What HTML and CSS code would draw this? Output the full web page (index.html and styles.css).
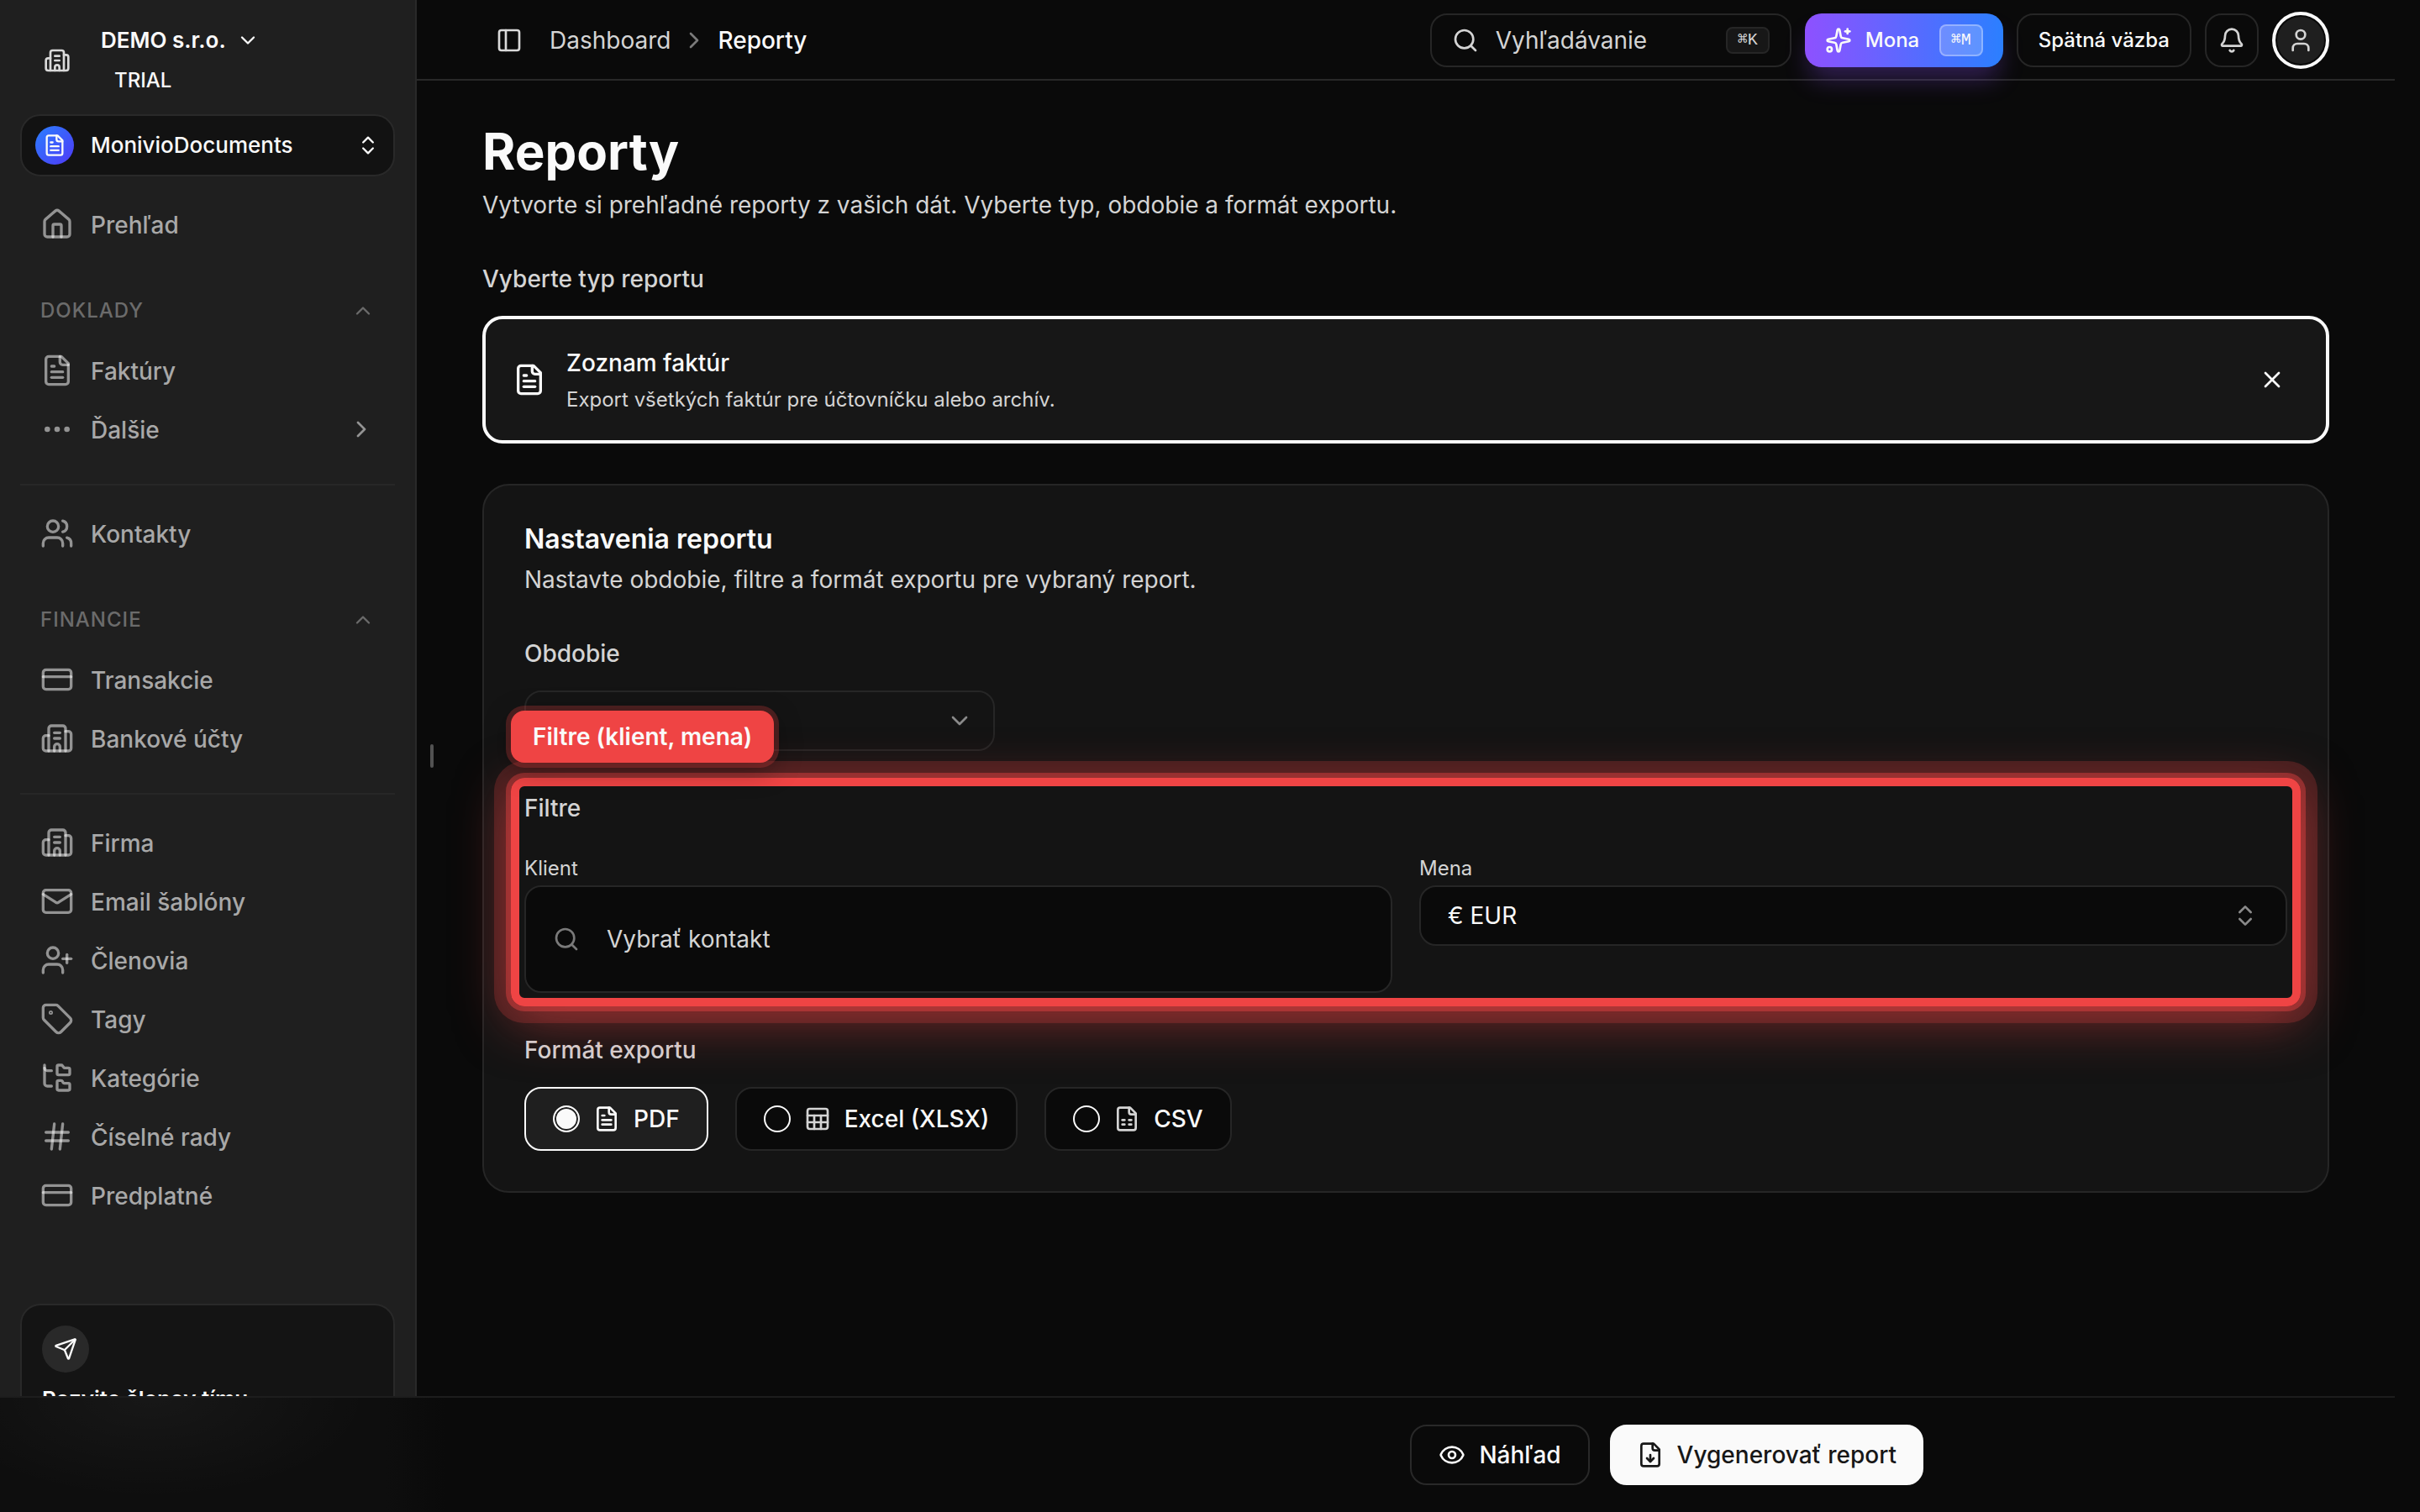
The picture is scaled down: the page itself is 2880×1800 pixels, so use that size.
FILE: index.html
```html
<!DOCTYPE html>
<html lang="sk">
<head>
    <meta charset="UTF-8">
    <meta name="viewport" content="width=device-width, initial-scale=1.0">
    <title>Reporty</title>
    <link rel="stylesheet" href="styles.css">
</head>
<body>
    <!-- Icon sprite -->
    <svg class="sprite" aria-hidden="true">
        <symbol id="building" viewBox="0 0 24 24"><path d="M10 12h4"/><path d="M10 8h4"/><path d="M14 21v-3a2 2 0 0 0-4 0v3"/><path d="M6 10H4a2 2 0 0 0-2 2v7a2 2 0 0 0 2 2h16a2 2 0 0 0 2-2V9a2 2 0 0 0-2-2h-2"/><path d="M6 21V5a2 2 0 0 1 2-2h8a2 2 0 0 1 2 2v16"/></symbol>
        <symbol id="file-text" viewBox="0 0 24 24"><path d="M15 2H6a2 2 0 0 0-2 2v16a2 2 0 0 0 2 2h12a2 2 0 0 0 2-2V7Z"/><path d="M14 2v4a2 2 0 0 0 2 2h4"/><path d="M10 9H8"/><path d="M16 13H8"/><path d="M16 17H8"/></symbol>
        <symbol id="file-sheet" viewBox="0 0 24 24"><path d="M15 2H6a2 2 0 0 0-2 2v16a2 2 0 0 0 2 2h12a2 2 0 0 0 2-2V7Z"/><path d="M14 2v4a2 2 0 0 0 2 2h4"/><path d="M8 13h2"/><path d="M14 13h2"/><path d="M8 17h2"/><path d="M14 17h2"/></symbol>
        <symbol id="file-down" viewBox="0 0 24 24"><path d="M15 2H6a2 2 0 0 0-2 2v16a2 2 0 0 0 2 2h12a2 2 0 0 0 2-2V7Z"/><path d="M14 2v4a2 2 0 0 0 2 2h4"/><path d="M12 18v-6"/><path d="m9 15 3 3 3-3"/></symbol>
        <symbol id="sheet" viewBox="0 0 24 24"><rect width="18" height="18" x="3" y="3" rx="2"/><path d="M3 9h18"/><path d="M3 15h18"/><path d="M9 9v12"/><path d="M15 9v12"/></symbol>
        <symbol id="chevron-down" viewBox="0 0 24 24"><path d="m6 9 6 6 6-6"/></symbol>
        <symbol id="chevron-up" viewBox="0 0 24 24"><path d="m18 15-6-6-6 6"/></symbol>
        <symbol id="chevron-right" viewBox="0 0 24 24"><path d="m9 18 6-6-6-6"/></symbol>
        <symbol id="chevrons" viewBox="0 0 24 24"><path d="m7 15 5 5 5-5"/><path d="m7 9 5-5 5 5"/></symbol>
        <symbol id="house" viewBox="0 0 24 24"><path d="M15 21v-8a1 1 0 0 0-1-1h-4a1 1 0 0 0-1 1v8"/><path d="M3 10a2 2 0 0 1 .709-1.528l7-5.999a2 2 0 0 1 2.582 0l7 5.999A2 2 0 0 1 21 10v9a2 2 0 0 1-2 2H5a2 2 0 0 1-2-2z"/></symbol>
        <symbol id="dots" viewBox="0 0 24 24"><circle cx="12" cy="12" r="1"/><circle cx="19" cy="12" r="1"/><circle cx="5" cy="12" r="1"/></symbol>
        <symbol id="users" viewBox="0 0 24 24"><path d="M16 21v-2a4 4 0 0 0-4-4H6a4 4 0 0 0-4 4v2"/><path d="M16 3.128a4 4 0 0 1 0 7.744"/><path d="M22 21v-2a4 4 0 0 0-3-3.87"/><circle cx="9" cy="7" r="4"/></symbol>
        <symbol id="user-plus" viewBox="0 0 24 24"><path d="M16 21v-2a4 4 0 0 0-4-4H6a4 4 0 0 0-4 4v2"/><circle cx="9" cy="7" r="4"/><path d="M19 8v6"/><path d="M22 11h-6"/></symbol>
        <symbol id="user" viewBox="0 0 24 24"><path d="M19 21v-2a4 4 0 0 0-4-4H9a4 4 0 0 0-4 4v2"/><circle cx="12" cy="7" r="4"/></symbol>
        <symbol id="card" viewBox="0 0 24 24"><rect width="20" height="14" x="2" y="5" rx="2"/><path d="M2 10h20"/></symbol>
        <symbol id="mail" viewBox="0 0 24 24"><path d="m22 7-8.991 5.727a2 2 0 0 1-2.009 0L2 7"/><rect width="20" height="16" x="2" y="4" rx="2"/></symbol>
        <symbol id="tag" viewBox="0 0 24 24"><path d="M12.586 2.586A2 2 0 0 0 11.172 2H4a2 2 0 0 0-2 2v7.172a2 2 0 0 0 .586 1.414l8.704 8.704a2.426 2.426 0 0 0 3.42 0l6.58-6.58a2.426 2.426 0 0 0 0-3.42z"/><circle cx="7.5" cy="7.5" r=".5"/></symbol>
        <symbol id="folder-tree" viewBox="0 0 24 24"><path d="M20 10a1 1 0 0 0 1-1V6a1 1 0 0 0-1-1h-2.5a1 1 0 0 1-.8-.4l-.9-1.2A1 1 0 0 0 15 3h-2a1 1 0 0 0-1 1v5a1 1 0 0 0 1 1Z"/><path d="M20 21a1 1 0 0 0 1-1v-3a1 1 0 0 0-1-1h-2.9a1 1 0 0 1-.88-.55l-.42-.85a1 1 0 0 0-.92-.6H13a1 1 0 0 0-1 1v5a1 1 0 0 0 1 1Z"/><path d="M3 5a2 2 0 0 0 2 2h3"/><path d="M3 3v13a2 2 0 0 0 2 2h3"/></symbol>
        <symbol id="hash" viewBox="0 0 24 24"><path d="M4 9h16"/><path d="M4 15h16"/><path d="M10 3 8 21"/><path d="m16 3-2 18"/></symbol>
        <symbol id="send" viewBox="0 0 24 24"><path d="M14.536 21.686a.5.5 0 0 0 .937-.024l6.5-19a.496.496 0 0 0-.635-.635l-19 6.5a.5.5 0 0 0-.024.937l7.93 3.18a2 2 0 0 1 1.112 1.11z"/><path d="m21.854 2.147-10.94 10.939"/></symbol>
        <symbol id="panel" viewBox="0 0 24 24"><rect width="18" height="18" x="3" y="3" rx="2"/><path d="M9 3v18"/></symbol>
        <symbol id="search" viewBox="0 0 24 24"><path d="m21 21-4.34-4.34"/><circle cx="11" cy="11" r="8"/></symbol>
        <symbol id="sparkles" viewBox="0 0 24 24"><path d="M11.017 2.814a1 1 0 0 1 1.966 0l1.051 5.558a2 2 0 0 0 1.594 1.594l5.558 1.051a1 1 0 0 1 0 1.966l-5.558 1.051a2 2 0 0 0-1.594 1.594l-1.051 5.558a1 1 0 0 1-1.966 0l-1.051-5.558a2 2 0 0 0-1.594-1.594l-5.558-1.051a1 1 0 0 1 0-1.966l5.558-1.051a2 2 0 0 0 1.594-1.594z"/><path d="M20 2v4"/><path d="M22 4h-4"/><circle cx="4" cy="20" r="2"/></symbol>
        <symbol id="bell" viewBox="0 0 24 24"><path d="M10.268 21a2 2 0 0 0 3.464 0"/><path d="M3.262 15.326A1 1 0 0 0 4 17h16a1 1 0 0 0 .74-1.673C19.41 13.956 18 12.499 18 8A6 6 0 0 0 6 8c0 4.499-1.411 5.956-2.738 7.326"/></symbol>
        <symbol id="close" viewBox="0 0 24 24"><path d="M18 6 6 18"/><path d="m6 6 12 12"/></symbol>
        <symbol id="eye" viewBox="0 0 24 24"><path d="M2.062 12.348a1 1 0 0 1 0-.696 10.75 10.75 0 0 1 19.876 0 1 1 0 0 1 0 .696 10.75 10.75 0 0 1-19.876 0"/><circle cx="12" cy="12" r="3"/></symbol>
    </svg>

    <div class="app">
        <aside class="sidebar">
            <div class="company">
                <svg class="icon"><use href="#building"/></svg>
                <div class="company-info">
                    <button class="company-name">DEMO s.r.o. <svg class="icon icon-sm"><use href="#chevron-down"/></svg></button>
                    <span class="company-plan">TRIAL</span>
                </div>
            </div>

            <button class="product">
                <span class="product-logo"><svg class="icon icon-sm"><use href="#file-text"/></svg></span>
                <span class="grow">MonivioDocuments</span>
                <svg class="icon icon-sm"><use href="#chevrons"/></svg>
            </button>

            <nav class="nav">
                <a class="nav-item" href="#"><svg class="icon icon-lg"><use href="#house"/></svg>Prehľad</a>

                <button class="nav-label">DOKLADY <svg class="icon icon-sm"><use href="#chevron-up"/></svg></button>
                <a class="nav-item" href="#"><svg class="icon icon-lg"><use href="#file-text"/></svg>Faktúry</a>
                <a class="nav-item" href="#"><svg class="icon icon-lg"><use href="#dots"/></svg><span class="grow">Ďalšie</span><svg class="icon"><use href="#chevron-right"/></svg></a>
                <hr>

                <a class="nav-item" href="#"><svg class="icon icon-lg"><use href="#users"/></svg>Kontakty</a>

                <button class="nav-label">FINANCIE <svg class="icon icon-sm"><use href="#chevron-up"/></svg></button>
                <a class="nav-item" href="#"><svg class="icon icon-lg"><use href="#card"/></svg>Transakcie</a>
                <a class="nav-item" href="#"><svg class="icon icon-lg"><use href="#building"/></svg>Bankové účty</a>
                <hr>

                <a class="nav-item" href="#"><svg class="icon icon-lg"><use href="#building"/></svg>Firma</a>
                <a class="nav-item" href="#"><svg class="icon icon-lg"><use href="#mail"/></svg>Email šablóny</a>
                <a class="nav-item" href="#"><svg class="icon icon-lg"><use href="#user-plus"/></svg>Členovia</a>
                <a class="nav-item" href="#"><svg class="icon icon-lg"><use href="#tag"/></svg>Tagy</a>
                <a class="nav-item" href="#"><svg class="icon icon-lg"><use href="#folder-tree"/></svg>Kategórie</a>
                <a class="nav-item" href="#"><svg class="icon icon-lg"><use href="#hash"/></svg>Číselné rady</a>
                <a class="nav-item" href="#"><svg class="icon icon-lg"><use href="#card"/></svg>Predplatné</a>
            </nav>

            <div class="invite">
                <span class="invite-icon"><svg class="icon icon-sm"><use href="#send"/></svg></span>
                <h2>Pozvite členov tímu</h2>
            </div>
        </aside>

        <div class="content">
            <span class="resize-handle"></span>

            <header class="topbar">
                <button class="panel-toggle" aria-label="Bočný panel"><svg class="icon"><use href="#panel"/></svg></button>
                <nav class="breadcrumb grow">
                    <a href="#">Dashboard</a>
                    <svg class="icon"><use href="#chevron-right"/></svg>
                    <span class="current">Reporty</span>
                </nav>
                <button class="top-btn search-btn">
                    <svg class="icon"><use href="#search"/></svg>
                    <span class="grow">Vyhľadávanie</span>
                    <kbd>⌘K</kbd>
                </button>
                <button class="mona-btn"><svg class="icon"><use href="#sparkles"/></svg><span class="grow">Mona</span><kbd>⌘M</kbd></button>
                <button class="top-btn feedback-btn">Spätná väzba</button>
                <button class="top-btn bell-btn" aria-label="Upozornenia"><svg class="icon"><use href="#bell"/></svg></button>
                <button class="avatar" aria-label="Profil"><svg class="icon"><use href="#user"/></svg></button>
            </header>

            <main class="page">
                <h1>Reporty</h1>
                <p class="lead">Vytvorte si prehľadné reporty z vašich dát. Vyberte typ, obdobie a formát exportu.</p>

                <h2 class="label">Vyberte typ reportu</h2>
                <section class="report-type">
                    <svg class="icon icon-lg"><use href="#file-text"/></svg>
                    <div class="grow">
                        <h3>Zoznam faktúr</h3>
                        <p>Export všetkých faktúr pre účtovníčku alebo archív.</p>
                    </div>
                    <button class="close-btn" aria-label="Zavrieť"><svg class="icon"><use href="#close"/></svg></button>
                </section>

                <form class="settings">
                    <h2>Nastavenia reportu</h2>
                    <p>Nastavte obdobie, filtre a formát exportu pre vybraný report.</p>

                    <label class="label" for="period">Obdobie</label>
                    <div class="select period">
                        <select id="period"><option></option></select>
                        <svg class="icon"><use href="#chevron-down"/></svg>
                    </div>

                    <section class="filters">
                        <div class="highlight"></div>
                        <span class="highlight-label">Filtre (klient, mena)</span>
                        <h3 class="label">Filtre</h3>
                        <div class="filter-grid">
                            <div class="field">
                                <label for="client">Klient</label>
                                <div class="client-box">
                                    <svg class="icon"><use href="#search"/></svg>
                                    <input id="client" type="text" placeholder="Vybrať kontakt">
                                </div>
                            </div>
                            <div class="field">
                                <label for="currency">Mena</label>
                                <div class="select currency">
                                    <select id="currency"><option>€ EUR</option></select>
                                    <svg class="icon"><use href="#chevrons"/></svg>
                                </div>
                            </div>
                        </div>
                    </section>

                    <h3 class="label">Formát exportu</h3>
                    <div class="formats">
                        <label class="format"><input type="radio" name="format" checked><svg class="icon"><use href="#file-text"/></svg>PDF</label>
                        <label class="format"><input type="radio" name="format"><svg class="icon"><use href="#sheet"/></svg>Excel (XLSX)</label>
                        <label class="format"><input type="radio" name="format"><svg class="icon"><use href="#file-sheet"/></svg>CSV</label>
                    </div>
                </form>
            </main>
        </div>
    </div>

    <footer class="actions">
        <div class="actions-inner">
            <button class="btn"><svg class="icon"><use href="#eye"/></svg>Náhľad</button>
            <button class="btn btn-primary"><svg class="icon"><use href="#file-down"/></svg>Vygenerovať report</button>
        </div>
    </footer>
</body>
</html>
```
FILE: styles.css
```css
* {
    box-sizing: border-box;
}
body {
    margin: 0;
    font-family: Inter, "Liberation Sans", sans-serif;
    font-size: 28px;
    line-height: 40px;
    color: #fafafa;
    background-color: #0a0a0a;
}
h1, h2, h3, p {
    margin: 0;
}
button, input, select {
    font: inherit;
    color: inherit;
    background: none;
    border: none;
    padding: 0;
    margin: 0;
}
button {
    cursor: pointer;
    text-align: left;
}
a {
    color: inherit;
    text-decoration: none;
}
kbd {
    display: flex;
    align-items: center;
    justify-content: center;
    width: 52px;
    height: 32px;
    font-family: "Liberation Mono", "DejaVu Sans Mono", monospace;
    font-size: 20px;
    line-height: 24px;
    border: 2px solid #262626;
    border-radius: 8px;
    background-color: #171717;
}
.sprite {
    position: absolute;
    width: 0;
    height: 0;
}
.icon {
    flex: none;
    width: 32px;
    height: 32px;
    fill: none;
    stroke: currentColor;
    stroke-width: 2;
    stroke-linecap: round;
    stroke-linejoin: round;
}
.icon-sm {
    width: 28px;
    height: 28px;
}
.icon-lg {
    width: 40px;
    height: 40px;
}
.grow {
    flex: 1;
}

/* Layout */
.app {
    display: grid;
    grid-template-columns: 496px 1fr;
    height: 100vh;
    padding-right: 30px;
    overflow: hidden;
}
.content {
    position: relative;
}

/* Sidebar */
.sidebar {
    display: flex;
    flex-direction: column;
    height: 100vh;
    padding: 16px 24px 0;
    overflow: hidden;
    background-color: #1f1f1f;
    border-right: 2px solid #292929;
}
.company {
    display: flex;
    flex: none;
    align-items: center;
    gap: 36px;
    height: 112px;
    padding-left: 28px;
    color: #d9d9d9;
}
.company-info {
    display: flex;
    flex-direction: column;
    color: #fafafa;
}
.company-name {
    display: flex;
    align-items: center;
    gap: 12px;
    height: 48px;
    font-size: 26px;
    font-weight: 600;
}
.company-plan {
    padding-left: 16px;
    font-size: 24px;
    font-weight: 500;
    line-height: 48px;
}
.product {
    display: flex;
    flex: none;
    align-items: center;
    gap: 20px;
    height: 74px;
    margin-top: 8px;
    padding: 0 16px;
    font-size: 26px;
    font-weight: 500;
    border: 2px solid #292929;
    border-radius: 24px;
    background-color: #121212;
}
.product-logo {
    display: grid;
    place-items: center;
    width: 46px;
    height: 46px;
    border-radius: 50%;
    background: linear-gradient(135deg, #2b7fff, #4f39f6);
}
.nav {
    flex: none;
    margin-top: 23px;
}
.nav-item {
    display: flex;
    align-items: center;
    gap: 20px;
    height: 70px;
    padding: 0 24px;
    font-weight: 500;
    color: #a8a8a8;
}
.nav-item .icon {
    margin-bottom: 3px;
    color: rgba(255, 255, 255, 0.52);
}
.nav-label {
    display: flex;
    align-items: center;
    justify-content: space-between;
    width: 100%;
    height: 74px;
    margin-top: 30px;
    padding: 0 24px;
    font-size: 24px;
    font-weight: 500;
    letter-spacing: 1px;
    color: #6b6b6b;
}
.nav hr {
    height: 2px;
    margin: 29px 0 23px;
    border: none;
    background-color: #272727;
}
.invite {
    flex: 1;
    margin-top: 93px;
    padding: 24px;
    border: 2px solid #292929;
    border-bottom: none;
    border-radius: 24px 24px 0 0;
    background-color: #141414;
}
.invite-icon {
    display: grid;
    place-items: center;
    width: 56px;
    height: 56px;
    border-radius: 50%;
    background-color: #292929;
}
.invite h2 {
    margin-top: 12px;
    font-size: 26px;
    font-weight: 600;
    line-height: 40px;
}

/* Top bar */
.resize-handle {
    position: absolute;
    top: 50%;
    left: 16px;
    width: 4px;
    height: 28px;
    margin-top: -14px;
    border-radius: 2px;
    background-color: #525252;
}
.topbar {
    display: flex;
    align-items: center;
    gap: 16px;
    height: 96px;
    padding: 2px 78px 0;
    border-bottom: 2px solid #292929;
}
.panel-toggle {
    display: grid;
    place-items: center;
    width: 64px;
    height: 64px;
    color: #d9d9d9;
}
.breadcrumb {
    display: flex;
    align-items: center;
    gap: 12px;
    color: #d4d4d4;
}
.breadcrumb .icon {
    color: #7a7a7a;
}
.current {
    font-weight: 500;
    color: #fafafa;
}
.top-btn {
    display: flex;
    align-items: center;
    height: 64px;
    border: 2px solid #262626;
    border-radius: 20px;
    color: #d4d4d4;
}
.search-btn {
    gap: 20px;
    width: 430px;
    padding: 0 24px;
}
.mona-btn {
    display: flex;
    align-items: center;
    gap: 16px;
    width: 236px;
    height: 64px;
    padding: 0 24px;
    font-size: 24px;
    font-weight: 500;
    border-radius: 20px;
    background: linear-gradient(90deg, #8e51ff, #2b7fff);
    box-shadow: 0 20px 30px -6px rgba(142, 81, 255, 0.3);
}
.mona-btn kbd {
    height: 38px;
    border-color: rgba(255, 255, 255, 0.3);
    background-color: rgba(255, 255, 255, 0.2);
}
.feedback-btn {
    padding: 0 24px;
    font-size: 24px;
    font-weight: 500;
    color: #fafafa;
}
.bell-btn {
    justify-content: center;
    width: 64px;
}
.avatar {
    display: grid;
    place-items: center;
    width: 68px;
    height: 68px;
    border: 4px solid #fafafa;
    border-radius: 50%;
    color: #d4d4d4;
    background-color: #1f1f1f;
    box-shadow: inset 0 0 0 2px #0a0a0a;
}

/* Page */
.page {
    padding: 48px 78px;
}
h1 {
    font-size: 60px;
    font-weight: 700;
    line-height: 72px;
}
.lead {
    margin-top: 8px;
    color: #d4d4d4;
}
.label {
    display: block;
    margin: 48px 0 24px;
    font-size: 28px;
    font-weight: 500;
    line-height: 40px;
    color: #d4d4d4;
}
.report-type {
    display: flex;
    align-items: center;
    gap: 24px;
    height: 152px;
    padding: 0 32px;
    border: 4px solid #fafafa;
    border-radius: 24px;
    background-color: #171717;
}
.report-type h3 {
    font-size: 28px;
    font-weight: 500;
    line-height: 40px;
}
.report-type p {
    margin-top: 8px;
    font-size: 24px;
    line-height: 32px;
    color: #d4d4d4;
}
.close-btn {
    display: grid;
    place-items: center;
    width: 64px;
    height: 64px;
}
.settings {
    margin-top: 48px;
    padding: 48px;
    border: 2px solid #262626;
    border-radius: 32px;
    background-color: #141414;
}
.settings > h2 {
    font-size: 32px;
    font-weight: 600;
    line-height: 32px;
}
.settings > p {
    margin-top: 12px;
    color: #d4d4d4;
}

/* The arrow shares one grid cell with the select */
.select {
    display: grid;
    align-items: center;
}
.select select,
.select .icon {
    grid-area: 1 / 1;
}
.select .icon {
    justify-self: end;
    margin-right: 26px;
    pointer-events: none;
    color: #8a8a8a;
}
.select select {
    width: 100%;
    height: 72px;
    padding: 0 32px;
    appearance: none;
    border: 2px solid #262626;
    border-radius: 20px;
}
.period {
    width: 560px;
}
.currency select {
    background-color: #0a0a0a;
}
.currency .icon {
    margin-right: 34px;
}

/* Filters */
.filters {
    position: relative;
    margin: 48px 0;
}
.filters .label {
    margin: 0 0 36px;
}
.highlight {
    position: absolute;
    inset: -16px;
    border: 10px solid #ef4444;
    border-radius: 16px;
    box-shadow:
        0 0 0 6px rgba(239, 68, 68, 0.42),
        0 0 0 20px rgba(239, 68, 68, 0.22),
        0 16px 64px rgba(239, 68, 68, 0.5);
    pointer-events: none;
}
.highlight-label {
    position: absolute;
    top: -96px;
    left: -16px;
    padding: 0 26px;
    font-size: 28px;
    font-weight: 600;
    line-height: 62px;
    border-radius: 16px;
    background-color: #ef4444;
    box-shadow:
        0 0 0 6px rgba(239, 68, 68, 0.25),
        0 8px 32px rgba(0, 0, 0, 0.4);
}
.filter-grid {
    display: grid;
    grid-template-columns: 1fr 1fr;
    gap: 32px;
}
.field label {
    display: block;
    margin-bottom: 4px;
    font-size: 24px;
    line-height: 32px;
    color: #d4d4d4;
}
.client-box {
    display: flex;
    align-items: center;
    gap: 32px;
    height: 128px;
    padding: 0 32px;
    border: 2px solid #262626;
    border-radius: 20px;
    background-color: #0a0a0a;
}
.client-box .icon {
    color: #7a7a7a;
}
.client-box input {
    flex: 1;
}
.client-box input::placeholder {
    color: #d4d4d4;
    opacity: 1;
}

/* Export formats */
.formats {
    display: flex;
    gap: 32px;
}
.format {
    display: flex;
    align-items: center;
    gap: 16px;
    height: 76px;
    padding: 0 32px;
    font-weight: 500;
    border: 2px solid #262626;
    border-radius: 20px;
    background-color: #0a0a0a;
}
.format .icon {
    color: #d4d4d4;
}
.format input {
    width: 32px;
    height: 32px;
    appearance: none;
    border: 2px solid #fafafa;
    border-radius: 50%;
}
.format input:checked {
    background-color: #fafafa;
    box-shadow: inset 0 0 0 2px #1f1f1f;
}
.format:has(input:checked) {
    border-color: #fafafa;
    background-color: #1f1f1f;
}
.format:has(input:checked) .icon {
    color: #fafafa;
}

/* Bottom bar, slightly lighter where it covers the sidebar */
.actions {
    position: fixed;
    right: 30px;
    bottom: 0;
    left: 0;
    padding: 32px 0;
    border-top: 2px solid #1d1d1d;
    background:
        radial-gradient(260px 120px at 180px 0, rgba(255, 255, 255, 0.04), transparent),
        linear-gradient(90deg, #0e0e0e 460px, #0a0a0a 530px);
}
.actions-inner {
    display: flex;
    justify-content: flex-end;
    gap: 24px;
    max-width: 1792px;
    margin: 0 auto;
    padding: 0 32px;
}
.btn {
    display: flex;
    align-items: center;
    gap: 16px;
    height: 72px;
    padding: 0 32px;
    font-weight: 500;
    border: 2px solid #292929;
    border-radius: 20px;
}
.btn-primary {
    padding: 0 30px;
    color: #171717;
    border-color: #fafafa;
    background-color: #fafafa;
}
```
